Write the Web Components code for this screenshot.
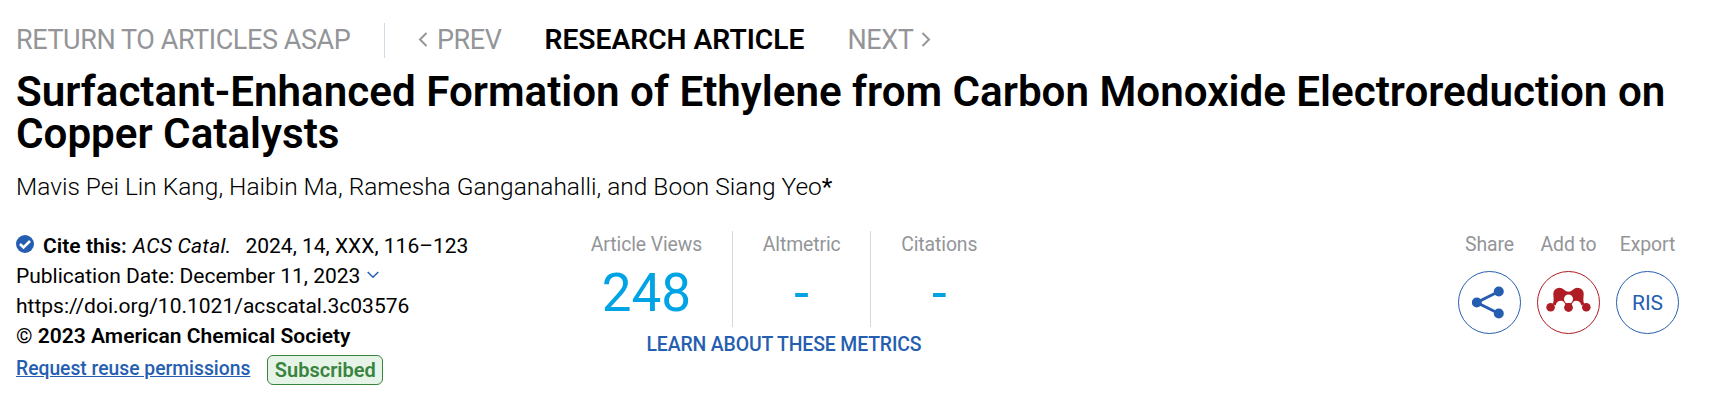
<!DOCTYPE html>
<html lang="en">
<head>
<meta charset="utf-8">
<title>Surfactant-Enhanced Formation of Ethylene from Carbon Monoxide Electroreduction on Copper Catalysts</title>
<style>
  body {
    margin: 0;
    background: #fff;
    color: #000;
    font-family: Roboto, "Liberation Sans", sans-serif;
  }
</style>
</head>
<body>
<article-header>
  <article-nav slot="nav" back="RETURN TO ARTICLES ASAP" type="RESEARCH ARTICLE"></article-nav>
  <span slot="title">Surfactant-Enhanced Formation of Ethylene from Carbon Monoxide Electroreduction on Copper Catalysts</span>
  <span slot="authors">Mavis Pei Lin Kang, Haibin Ma, Ramesha Ganganahalli, and Boon Siang Yeo<b style="font-weight: 400">*</b></span>
  <article-citation slot="citation" journal="ACS Catal." issue="2024, 14, XXX, 116–123" date="December 11, 2023" doi="https://doi.org/10.1021/acscatal.3c03576"></article-citation>
  <article-metrics slot="metrics">
    <metric-item label="Article Views">248</metric-item>
    <metric-item label="Altmetric">-</metric-item>
    <metric-item label="Citations">-</metric-item>
  </article-metrics>
  <action-button slot="actions" label="Share">
    <svg width="34" height="34" viewBox="0 0 34 34" fill="currentColor" style="margin-right: 2px">
      <path d="M26.800 5.500 4.800 16.500l22 11" fill="none" stroke="currentColor" stroke-width="3"/>
      <circle cx="26.800" cy="5.500" r="5"/><circle cx="4.800" cy="16.500" r="5"/><circle cx="26.800" cy="27.500" r="5"/>
    </svg>
  </action-button>
  <action-button slot="actions" label="Add to" style="--accent: #b01c23">
    <svg width="45" height="26" viewBox="0 0 45 26" fill="currentColor" style="margin-bottom: 6px">
      <path d="M6.500 17C8.500 14 7.300 10 7.300 7a6.200 6.200 0 0 1 10.500-4.500Q22.500 7 27.200 2.500A6.200 6.200 0 0 1 37.700 7c0 3-1.200 7 .8 10l-3 1.500c-1-3.500-3-4.800-5.500-4.800-2 0-3.500 1.300-4.500 4.300h-6c-1-3-2.500-4.300-4.500-4.300-2.500 0-4.500 1.300-5.500 4.800z"/>
      <circle cx="22.500" cy="12" r="4.500" fill="#fff"/>
      <circle cx="4.600" cy="20.300" r="4.300"/><circle cx="22.500" cy="20.500" r="4.400"/><circle cx="40.300" cy="20.300" r="4.300"/>
    </svg>
  </action-button>
  <action-button slot="actions" label="Export">RIS</action-button>
</article-header>

<script>
class ArticleHeader extends HTMLElement {
  constructor() {
    super();
    this.attachShadow({ mode: "open" }).innerHTML = `
      <style>
        :host {
          display: block;
          padding: 23px 17px 0 16px;
        }

        h1 {
          margin: 13px 0 0;
          font-size: 42.15px;
          line-height: 42px;
          font-weight: 600;
        }

        .authors {
          margin-top: 16px;
          font-size: 24.5px;
          line-height: 31px;
          font-weight: 300;
        }

        .info {
          display: grid;
          grid-template-columns: 545px 1fr auto;
          margin-top: 29px;
          align-items: start;
        }

        .actions {
          display: flex;
          gap: 16px;
          padding-right: 39px;
        }
      </style>
      <slot name="nav"></slot>
      <h1><slot name="title"></slot></h1>
      <div class="authors"><slot name="authors"></slot></div>
      <div class="info">
        <slot name="citation"></slot>
        <slot name="metrics"></slot>
        <div class="actions"><slot name="actions"></slot></div>
      </div>
    `;
  }
}

class ArticleNav extends HTMLElement {
  constructor() {
    super();
    this.attachShadow({ mode: "open" });
  }

  connectedCallback() {
    this.shadowRoot.innerHTML = `
      <style>
        :host {
          display: flex;
          align-items: flex-start;
          height: 35px;
          color: #939598;
          font-size: 27px;
          line-height: 34px;
          letter-spacing: -0.42px;
        }

        .back {
          box-sizing: border-box;
          width: 369px;
          height: 35px;
          border-right: 1px solid #d2dae5;
        }

        .prev, .next {
          display: flex;
          align-items: center;
        }

        .prev {
          gap: 9px;
          margin-left: 33px;
        }

        .next {
          gap: 8px;
        }

        .type {
          margin: 0 43px;
          color: #000;
          font-size: 28.2px;
          line-height: 33px;
          font-weight: 600;
          letter-spacing: 0;
        }

        svg {
          margin-bottom: 1px;
          fill: none;
          stroke: currentColor;
          stroke-width: 2;
        }
      </style>
      <span class="back">${this.getAttribute("back")}</span>
      <span class="prev">
        <svg width="10" height="16" viewBox="0 0 10 16"><path d="M8.500 1 2 7.500 8.500 14"/></svg>PREV
      </span>
      <span class="type">${this.getAttribute("type")}</span>
      <span class="next">
        NEXT<svg width="10" height="16" viewBox="0 0 10 16"><path d="M1.500 1 8 7.500 1.500 14"/></svg>
      </span>
    `;
  }
}

class ArticleCitation extends HTMLElement {
  constructor() {
    super();
    this.attachShadow({ mode: "open" });
  }

  connectedCallback() {
    this.shadowRoot.innerHTML = `
      <style>
        :host {
          display: block;
          font-size: 21px;
          line-height: 30px;
          white-space: nowrap;
        }

        .cite {
          display: flex;
        }

        .check {
          margin: 4px 9px 0 0;
        }

        b {
          font-weight: 600;
          letter-spacing: 0.03px;
        }

        em {
          margin: 0 14px 0 6px;
          letter-spacing: 0.25px;
        }

        .rights {
          display: flex;
          align-items: flex-start;
          gap: 17px;
          margin-top: 4px;
        }

        a {
          color: #255eb0;
          font-size: 19.3px;
          font-weight: 500;
          line-height: 27px;
          text-decoration: underline;
        }

        .badge {
          box-sizing: border-box;
          height: 30px;
          padding: 0 6.5px;
          border: 1px solid #39833f;
          border-radius: 6px;
          background: #e5f4e6;
          color: #39833f;
          font-size: 20px;
          font-weight: 600;
          line-height: 28px;
        }
      </style>
      <div class="cite">
        <svg class="check" width="18" height="18" viewBox="0 0 18 18">
          <circle cx="9" cy="9" r="9" fill="#255eb0"/>
          <path d="m4 9 3.500 3.500L14 6" fill="none" stroke="#fff" stroke-width="2.600"/>
        </svg>
        <b>Cite this:</b><em>${this.getAttribute("journal")}</em><span>${this.getAttribute("issue")}</span>
      </div>
      <div>Publication Date: ${this.getAttribute("date")}
        <svg width="12" height="8" viewBox="0 0 12 8" style="vertical-align: 4px; margin-left: 1px">
          <path d="m.7 1 5.300 5.300L11.300 1" fill="none" stroke="#255eb0" stroke-width="1.500"/>
        </svg>
      </div>
      <div>${this.getAttribute("doi")}</div>
      <div>© <b>2023 American Chemical Society</b></div>
      <div class="rights"><a>Request reuse permissions</a><span class="badge">Subscribed</span></div>
    `;
  }
}

class ArticleMetrics extends HTMLElement {
  constructor() {
    super();
    this.attachShadow({ mode: "open" }).innerHTML = `
      <style>
        :host {
          display: block;
          white-space: nowrap;
        }

        .items {
          display: flex;
        }

        .learn {
          width: 446px;
          margin-top: 3px;
          color: #255eb0;
          font-size: 19.4px;
          font-weight: 500;
          line-height: 30px;
          letter-spacing: -0.12px;
          text-align: center;
        }
      </style>
      <div class="items"><slot></slot></div>
      <div class="learn">LEARN ABOUT THESE METRICS</div>
    `;
  }
}

class MetricItem extends HTMLElement {
  constructor() {
    super();
    this.attachShadow({ mode: "open" });
  }

  connectedCallback() {
    this.shadowRoot.innerHTML = `
      <style>
        :host {
          display: block;
          box-sizing: border-box;
          height: 96px;
          padding: 0 29.8px;
          border-right: 1px solid #d2dae0;
          text-align: center;
        }

        :host(:last-child) {
          border-right: 0;
        }

        .label {
          height: 28px;
          color: #939598;
          font-size: 19.4px;
          line-height: 27px;
          letter-spacing: -0.1px;
        }

        .value {
          color: #00a3e4;
          font-size: 53px;
          line-height: 68px;
        }
      </style>
      <div class="label">${this.getAttribute("label")}</div>
      <div class="value"><slot></slot></div>
    `;
  }
}

class ActionButton extends HTMLElement {
  constructor() {
    super();
    this.attachShadow({ mode: "open" });
  }

  connectedCallback() {
    this.shadowRoot.innerHTML = `
      <style>
        :host {
          display: block;
          width: 63px;
          text-align: center;
        }

        .label {
          height: 28px;
          color: #939598;
          font-size: 19.4px;
          line-height: 27px;
          letter-spacing: -0.1px;
        }

        .circle {
          display: flex;
          align-items: center;
          justify-content: center;
          box-sizing: border-box;
          height: 63px;
          margin-top: 12px;
          border: 1px solid var(--accent, #255eb0);
          border-radius: 50%;
          color: var(--accent, #255eb0);
          font-size: 21px;
        }
      </style>
      <div class="label">${this.getAttribute("label")}</div>
      <div class="circle"><slot></slot></div>
    `;
  }
}

customElements.define("article-header", ArticleHeader);
customElements.define("article-nav", ArticleNav);
customElements.define("article-citation", ArticleCitation);
customElements.define("article-metrics", ArticleMetrics);
customElements.define("metric-item", MetricItem);
customElements.define("action-button", ActionButton);
</script>
</body>
</html>
